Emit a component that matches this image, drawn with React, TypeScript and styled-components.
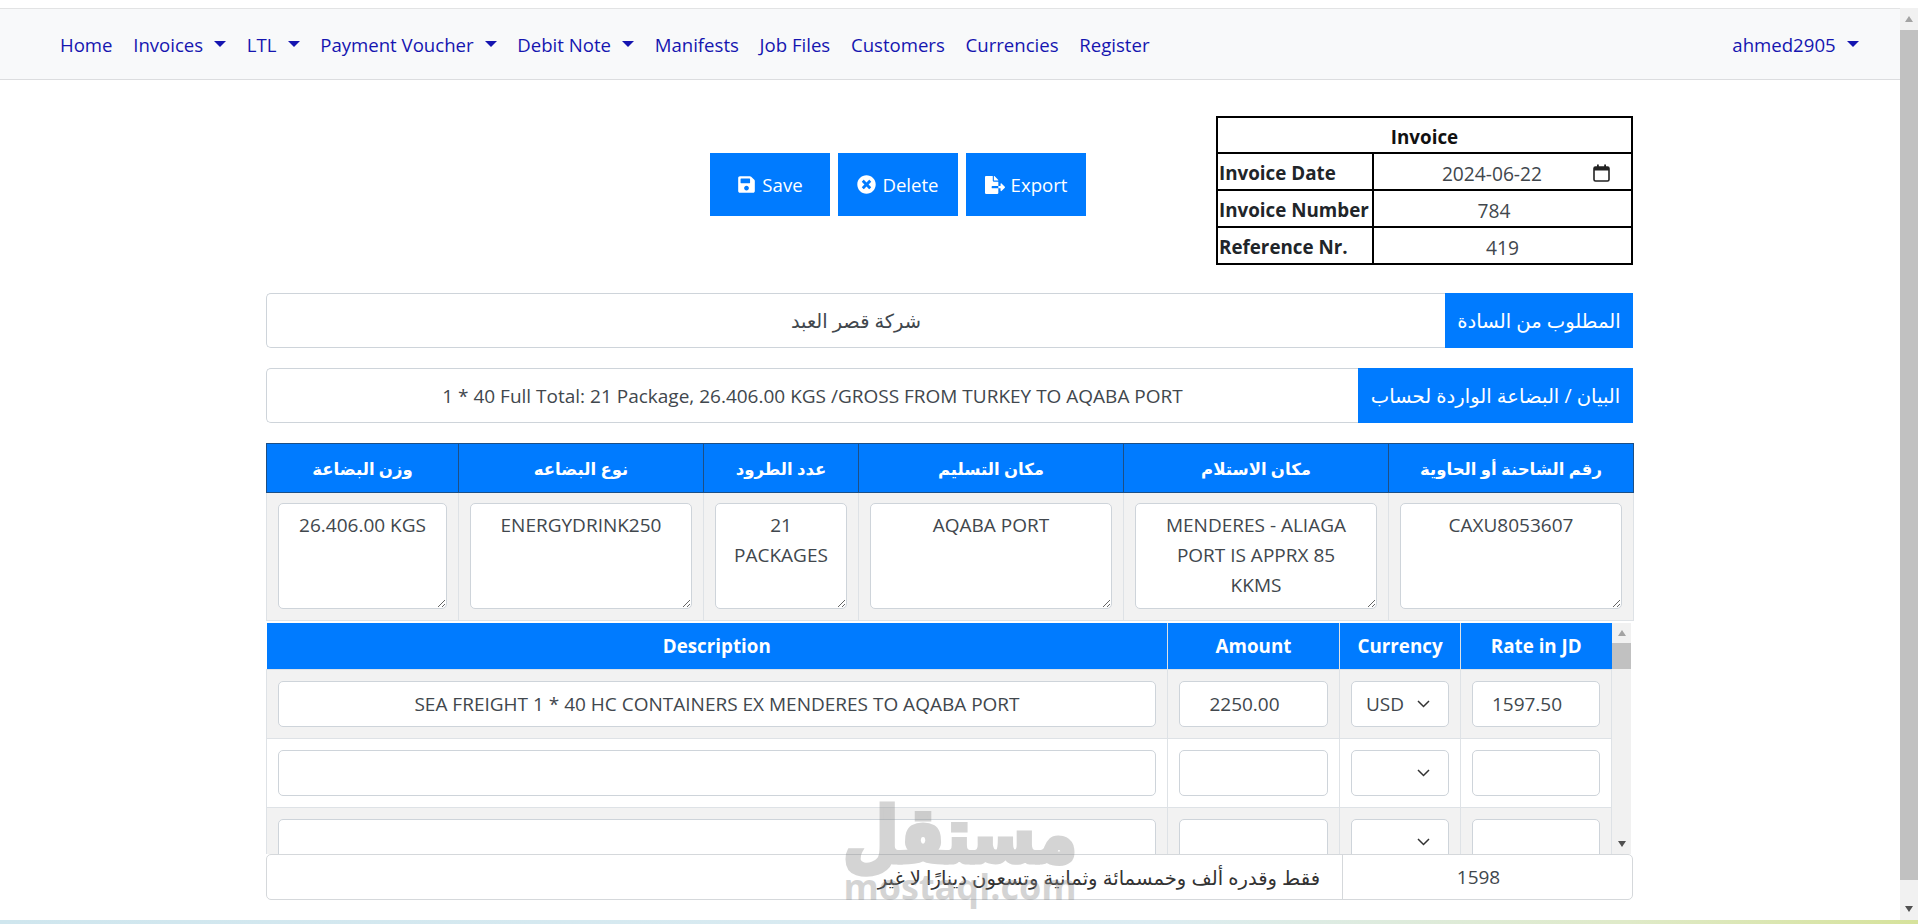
import { FaFileExport, FaSave, FaTimesCircle } from 'react-icons/fa';
import styled, { createGlobalStyle } from 'styled-components';

const GlobalStyle = createGlobalStyle`
  html, body {
    margin: 0;
    padding: 0;
    height: 100%;
    overflow: hidden;
    background: #fff;
  }
  * {
    box-sizing: border-box;
  }
  body {
    font-family: "Open Sans", "DejaVu Sans", sans-serif;
    color: #212529;
  }
`;

const Page = styled.div`
  width: 1918px;
  height: 924px;
  display: flex;
  flex-direction: column;
  overflow: hidden;
`;

const Shell = styled.div`
  flex: 1;
  display: flex;
  min-height: 0;
  padding-top: 8px;
`;

const Main = styled.div`
  flex: 1;
  min-width: 0;
`;

const Navbar = styled.nav`
  height: 72px;
  display: flex;
  align-items: center;
  justify-content: space-between;
  padding: 0 31px 0 49.6px;
  background: #f8f9fa;
  border-top: 1px solid #e2e3e4;
  border-bottom: 1px solid #dcdddf;
`;

const NavList = styled.div`
  display: flex;
  align-items: center;
`;

const NavLink = styled.a`
  display: flex;
  align-items: center;
  padding: 0 10.35px;
  font-size: 18.6px;
  color: #1515b0;
  white-space: nowrap;
  &::after {
    content: ${props => (props.$caret ? '""' : 'none')};
    margin-left: 11px;
    border-top: 6px solid #1515b0;
    border-left: 6px solid transparent;
    border-right: 6px solid transparent;
  }
`;

const Container = styled.div`
  width: 1367px;
  margin-left: 266px;
`;

const TopRow = styled.div`
  display: flex;
  justify-content: flex-end;
  align-items: flex-start;
  gap: 130px;
  padding-top: 36px;
`;

const Buttons = styled.div`
  display: flex;
  gap: 8px;
  margin-top: 37px;
`;

const Button = styled.button`
  width: 120px;
  height: 63px;
  display: flex;
  align-items: center;
  justify-content: center;
  gap: 6px;
  border: 0;
  background: #007bff;
  color: #fff;
  font-family: inherit;
  font-size: 18.6px;
`;

const InvoiceTable = styled.table`
  width: 417px;
  height: 149px;
  border-collapse: collapse;
  border: 2px solid #000;
  th, td {
    border: 2px solid #000;
    padding: 4px 1px 0;
  }
`;

const Caption = styled.th`
  font-size: 18.8px;
  font-weight: 700;
  color: #111;
`;

const LabelCell = styled.td`
  width: 156px;
  font-weight: 700;
  font-size: 18.8px;
  white-space: nowrap;
  color: #212529;
`;

const ValueCell = styled.td`
  text-align: center;
  color: #41474d;
  font-size: 19.2px;
  padding-right: ${props => props.$shift || 1}px !important;
`;

const DateValue = styled.div`
  display: flex;
  align-items: center;
  justify-content: flex-end;
  gap: 51px;
  padding-right: 20px;
`;

const InputGroup = styled.div`
  display: flex;
  height: 55px;
  margin-top: ${props => props.$top}px;
`;

const GroupField = styled.input`
  flex: 1;
  min-width: 0;
  height: 100%;
  border: 1px solid #ced4da;
  border-right: 0;
  border-radius: 5px 0 0 5px;
  color: #41474d;
  font-family: inherit;
  font-size: ${props => props.$size}px;
  text-align: center;
  background: #fff;
`;

const GroupLabel = styled.div`
  display: flex;
  align-items: center;
  justify-content: center;
  width: ${props => props.$width}px;
  background: #007bff;
  color: #fff;
  font-size: 19.6px;
  white-space: nowrap;
`;

const CargoTable = styled.table`
  width: 100%;
  margin-top: 20px;
  border-collapse: collapse;
  table-layout: fixed;
`;

const CargoHead = styled.th`
  width: ${props => props.$width}px;
  height: 49px;
  padding: 0;
  background: #007bff;
  border: 1px solid #1c4f86;
  color: #fff;
  font-size: 16.5px;
  font-weight: 700;
`;

const CargoCell = styled.td`
  height: 128px;
  padding: 10px 11px 11px;
  background: #f2f2f2;
  border: 1px solid #dee2e6;
`;

const TextArea = styled.textarea`
  display: block;
  width: 100%;
  height: 106px;
  padding: 6px 14px;
  border: 1px solid #ced4da;
  border-radius: 5px;
  background: #fff;
  color: #41474d;
  font-family: inherit;
  font-size: 19px;
  line-height: 30px;
  text-align: center;
  overflow: hidden;
`;

const ItemsWrap = styled.div`
  display: flex;
  height: 231px;
  margin-top: 2px;
  overflow: hidden;
`;

const ItemsTable = styled.table`
  width: 1345.5px;
  flex: none;
  height: 0;
  border-collapse: collapse;
  table-layout: fixed;
`;

const ItemHead = styled.th`
  width: ${props => props.$width}px;
  height: 46px;
  padding: 0;
  background: #007bff;
  border-left: 1px solid #dee2e6;
  color: #fff;
  font-size: 18.8px;
  font-weight: 700;
  &:first-child {
    border-left: 0;
  }
`;

const ItemRow = styled.tr`
  background: ${props => (props.$striped ? '#f2f2f2' : '#fff')};
`;

const ItemCell = styled.td`
  height: 68px;
  padding: 11px;
  border: 1px solid #dee2e6;
`;

const FieldInput = styled.input`
  display: block;
  width: 100%;
  height: 46px;
  padding: 0 ${props => props.$reserve || 12}px 0 12px;
  border: 1px solid #ced4da;
  border-radius: 5px;
  background: #fff;
  color: #41474d;
  font-family: inherit;
  font-size: 19px;
  text-align: center;
`;

const SelectBox = styled.div`
  position: relative;
  height: 46px;
`;

const Select = styled.select`
  width: 100%;
  height: 100%;
  padding: 0 0 0 14px;
  appearance: none;
  border: 1px solid #ced4da;
  border-radius: 5px;
  background: #fff;
  color: #41474d;
  font-family: inherit;
  font-size: 19px;
`;

const SelectArrow = styled.svg`
  position: absolute;
  right: 19px;
  top: 19px;
  width: 13px;
  height: 8px;
  pointer-events: none;
`;

const InnerScrollbar = styled.div`
  flex: 1;
  display: flex;
  flex-direction: column;
  align-items: center;
  margin-right: 2px;
  background: #f1f1f1;
`;

const Arrow = styled.div`
  width: 0;
  height: 0;
  border-left: 4.5px solid transparent;
  border-right: 4.5px solid transparent;
  border-${props => (props.$up ? 'bottom' : 'top')}: 6px solid ${props => props.$color};
`;

const ArrowSlot = styled.div`
  height: ${props => props.$height}px;
  display: flex;
  align-items: center;
  justify-content: center;
  flex: none;
`;

const Thumb = styled.div`
  width: 100%;
  height: ${props => props.$height}px;
  background: #c1c1c1;
  flex: none;
`;

const Track = styled.div`
  flex: 1;
`;

const TotalRow = styled.div`
  position: relative;
  display: flex;
  height: 46px;
  border: 1px solid #d5d8db;
  border-radius: 5px;
  background: #fff;
  color: #41474d;
`;

const TotalWords = styled.div`
  flex: 1;
  display: flex;
  align-items: center;
  padding-right: 22px;
  direction: rtl;
  font-size: 19.6px;
  color: #333;
`;

const TotalValue = styled.div`
  width: 290px;
  display: flex;
  align-items: center;
  justify-content: center;
  padding-right: 18px;
  font-size: 19px;
  border-left: 1px solid #d5d8db;
`;

const Watermark = styled.div`
  position: absolute;
  left: 573px;
  top: -60px;
  width: 240px;
  text-align: center;
  pointer-events: none;
  color: #8a8a8a;
  opacity: 0.36;
  font-weight: 700;
`;

const WatermarkArabic = styled.div`
  font-size: 64px;
  line-height: 76px;
  -webkit-text-stroke: 4px #8a8a8a;
  transform: scaleY(1.2);
`;

const WatermarkLatin = styled.div`
  margin-top: 1px;
  font-size: 36px;
  line-height: 30px;
`;

const PageScrollbar = styled.div`
  width: 18px;
  flex: none;
  display: flex;
  flex-direction: column;
  align-items: center;
  background: #f1f1f1;
`;

const BottomStrip = styled.div`
  height: 4px;
  flex: none;
  background: linear-gradient(90deg, #cfe6ee 0%, #dcecf2 60%, #dfeac8 85%, #d6e29b 100%);
`;

const navItems = [
  { label: 'Home' },
  { label: 'Invoices', caret: true },
  { label: 'LTL', caret: true },
  { label: 'Payment Voucher', caret: true },
  { label: 'Debit Note', caret: true },
  { label: 'Manifests' },
  { label: 'Job Files' },
  { label: 'Customers' },
  { label: 'Currencies' },
  { label: 'Register' },
];

const cargo = [
  { head: 'وزن البضاعة', width: 192, value: '26.406.00 KGS' },
  { head: 'نوع البضاعه', width: 245, value: 'ENERGYDRINK250' },
  { head: 'عدد الطرود', width: 155, value: '21 PACKAGES' },
  { head: 'مكان التسليم', width: 265, value: 'AQABA PORT' },
  { head: 'مكان الاستلام', width: 265, value: 'MENDERES - ALIAGA PORT IS APPRX 85 KKMS' },
  { head: 'رقم الشاحنة أو الحاوية', width: 245, value: 'CAXU8053607' },
];

const rows = [
  { desc: 'SEA FREIGHT 1 * 40 HC CONTAINERS EX MENDERES TO AQABA PORT', amount: '2250.00', cur: 'USD', rate: '1597.50' },
  { desc: '', amount: '', cur: '', rate: '' },
  { desc: '', amount: '', cur: '', rate: '' },
];

function App() {
  return (
    <Page>
      <GlobalStyle />
      <Shell>
        <Main>
          <Navbar>
            <NavList>
              {navItems.map(item => (
                <NavLink key={item.label} $caret={item.caret}>{item.label}</NavLink>
              ))}
            </NavList>
            <NavLink $caret>ahmed2905</NavLink>
          </Navbar>
          <Container>
            <TopRow>
              <Buttons>
                <Button><FaSave size={19} />Save</Button>
                <Button><FaTimesCircle size={19} />Delete</Button>
                <Button><FaFileExport size={20} />Export</Button>
              </Buttons>
              <InvoiceTable>
                <tbody>
                  <tr><Caption colSpan={2}>Invoice</Caption></tr>
                  <tr>
                    <LabelCell>Invoice Date</LabelCell>
                    <ValueCell>
                      <DateValue>
                        2024-06-22
                        <svg width="17" height="18" viewBox="0 0 17 18" fill="none">
                          <rect x="1" y="3" width="15" height="14" rx="1.5" stroke="#222" strokeWidth="1.6" />
                          <rect x="1" y="3" width="15" height="3.5" fill="#222" />
                          <rect x="4" y="0.5" width="1.8" height="3" fill="#222" />
                          <rect x="11.2" y="0.5" width="1.8" height="3" fill="#222" />
                        </svg>
                      </DateValue>
                    </ValueCell>
                  </tr>
                  <tr>
                    <LabelCell>Invoice Number</LabelCell>
                    <ValueCell $shift={18}>784</ValueCell>
                  </tr>
                  <tr>
                    <LabelCell>Reference Nr.</LabelCell>
                    <ValueCell>419</ValueCell>
                  </tr>
                </tbody>
              </InvoiceTable>
            </TopRow>

            <InputGroup $top={28}>
              <GroupField readOnly dir="rtl" $size={19.4} value="شركة قصر العبد" />
              <GroupLabel $width={188}>المطلوب من السادة</GroupLabel>
            </InputGroup>
            <InputGroup $top={20}>
              <GroupField readOnly $size={19} value="1 * 40 Full Total: 21 Package, 26.406.00 KGS /GROSS FROM TURKEY TO AQABA PORT" />
              <GroupLabel $width={275}>البيان / البضاعة الواردة لحساب</GroupLabel>
            </InputGroup>

            <CargoTable>
              <thead>
                <tr>
                  {cargo.map(c => <CargoHead key={c.head} $width={c.width}>{c.head}</CargoHead>)}
                </tr>
              </thead>
              <tbody>
                <tr>
                  {cargo.map(c => (
                    <CargoCell key={c.head}>
                      <TextArea readOnly value={c.value} />
                    </CargoCell>
                  ))}
                </tr>
              </tbody>
            </CargoTable>

            <ItemsWrap>
              <ItemsTable>
                <thead>
                  <tr>
                    <ItemHead $width={901}>Description</ItemHead>
                    <ItemHead $width={172}>Amount</ItemHead>
                    <ItemHead $width={121}>Currency</ItemHead>
                    <ItemHead $width={151}>Rate in JD</ItemHead>
                  </tr>
                </thead>
                <tbody>
                  {rows.map((row, i) => (
                    <ItemRow key={i} $striped={i % 2 === 0}>
                      <ItemCell><FieldInput readOnly value={row.desc} /></ItemCell>
                      <ItemCell><FieldInput readOnly $reserve={30} value={row.amount} /></ItemCell>
                      <ItemCell>
                        <SelectBox>
                          <Select value={row.cur} onChange={() => {}}>
                            <option value="">{''}</option>
                            <option value="USD">USD</option>
                          </Select>
                          <SelectArrow viewBox="0 0 13 8" fill="none">
                            <path d="M1 1l5.5 5.5L12 1" stroke="#333" strokeWidth="1.5" />
                          </SelectArrow>
                        </SelectBox>
                      </ItemCell>
                      <ItemCell><FieldInput readOnly $reserve={30} value={row.rate} /></ItemCell>
                    </ItemRow>
                  ))}
                </tbody>
              </ItemsTable>
              <InnerScrollbar>
                <ArrowSlot $height={20}><Arrow $up $color="#a3a3a3" /></ArrowSlot>
                <Thumb $height={26} />
                <Track />
                <ArrowSlot $height={20}><Arrow $color="#505050" /></ArrowSlot>
              </InnerScrollbar>
            </ItemsWrap>

            <TotalRow>
              <TotalWords>فقط وقدره ألف وخمسمائة وثمانية وتسعون دينارًا لا غير</TotalWords>
              <TotalValue>1598</TotalValue>
              <Watermark>
                <WatermarkArabic>مستقل</WatermarkArabic>
                <WatermarkLatin>mostaql.com</WatermarkLatin>
              </Watermark>
            </TotalRow>
          </Container>
        </Main>
        <PageScrollbar>
          <ArrowSlot $height={22}><Arrow $up $color="#a3a3a3" /></ArrowSlot>
          <Thumb $height={850} />
          <Track />
          <ArrowSlot $height={22}><Arrow $color="#505050" /></ArrowSlot>
        </PageScrollbar>
      </Shell>
      <BottomStrip />
    </Page>
  );
}

export default App;
